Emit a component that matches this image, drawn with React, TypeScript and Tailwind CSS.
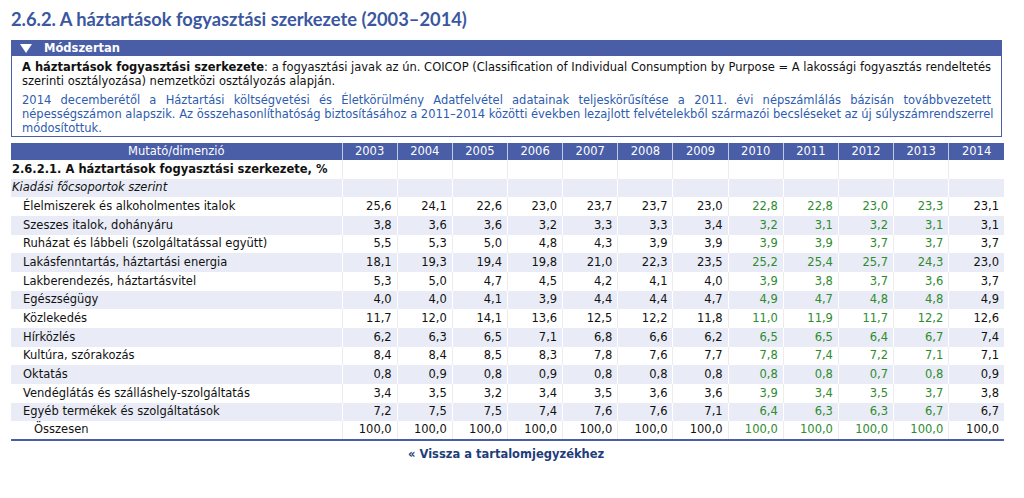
import React from "react"

const years = ["2003", "2004", "2005", "2006", "2007", "2008", "2009", "2010", "2011", "2012", "2013", "2014"]

// green = 2010–2013 columns
const rows: { label: string; values: string[]; total?: boolean }[] = [
  { label: "Élelmiszerek és alkoholmentes italok", values: ["25,6", "24,1", "22,6", "23,0", "23,7", "23,7", "23,0", "22,8", "22,8", "23,0", "23,3", "23,1"] },
  { label: "Szeszes italok, dohányáru", values: ["3,8", "3,6", "3,6", "3,2", "3,3", "3,3", "3,4", "3,2", "3,1", "3,2", "3,1", "3,1"] },
  { label: "Ruházat és lábbeli (szolgáltatással együtt)", values: ["5,5", "5,3", "5,0", "4,8", "4,3", "3,9", "3,9", "3,9", "3,9", "3,7", "3,7", "3,7"] },
  { label: "Lakásfenntartás, háztartási energia", values: ["18,1", "19,3", "19,4", "19,8", "21,0", "22,3", "23,5", "25,2", "25,4", "25,7", "24,3", "23,0"] },
  { label: "Lakberendezés, háztartásvitel", values: ["5,3", "5,0", "4,7", "4,5", "4,2", "4,1", "4,0", "3,9", "3,8", "3,7", "3,6", "3,7"] },
  { label: "Egészségügy", values: ["4,0", "4,0", "4,1", "3,9", "4,4", "4,4", "4,7", "4,9", "4,7", "4,8", "4,8", "4,9"] },
  { label: "Közlekedés", values: ["11,7", "12,0", "14,1", "13,6", "12,5", "12,2", "11,8", "11,0", "11,9", "11,7", "12,2", "12,6"] },
  { label: "Hírközlés", values: ["6,2", "6,3", "6,5", "7,1", "6,8", "6,6", "6,2", "6,5", "6,5", "6,4", "6,7", "7,4"] },
  { label: "Kultúra, szórakozás", values: ["8,4", "8,4", "8,5", "8,3", "7,8", "7,6", "7,7", "7,8", "7,4", "7,2", "7,1", "7,1"] },
  { label: "Oktatás", values: ["0,8", "0,9", "0,8", "0,9", "0,8", "0,8", "0,8", "0,8", "0,8", "0,7", "0,8", "0,9"] },
  { label: "Vendéglátás és szálláshely-szolgáltatás", values: ["3,4", "3,5", "3,2", "3,4", "3,5", "3,6", "3,6", "3,9", "3,4", "3,5", "3,7", "3,8"] },
  { label: "Egyéb termékek és szolgáltatások", values: ["7,2", "7,5", "7,5", "7,4", "7,6", "7,6", "7,1", "6,4", "6,3", "6,3", "6,7", "6,7"] },
  { label: "Összesen", values: Array(12).fill("100,0"), total: true },
]

const isGreen = (i: number) => i >= 7 && i <= 10

export default function App() {
  return (
    <div className="w-[1024px] h-[498px] bg-white pl-[11px] pt-[6px] font-['DejaVu_Sans',Verdana,sans-serif] text-[11.5px] text-[#111]">
      {/* Title */}
      <h1 className="font-['Lato',sans-serif] font-bold text-[18.3px] leading-[26px] text-[#3b57a0]">
        2.6.2. A háztartások fogyasztási szerkezete (2003–2014)
      </h1>

      {/* Methodology box */}
      <div className="mt-[8px] w-[991px] border border-[#4a5ea8]">
        <div className="flex items-center h-[15px] bg-[#4a5ea8] text-white font-bold leading-[15px]">
          <svg className="ml-[8px]" width="12" height="9" viewBox="0 0 12 9">
            <polygon points="0,0 12,0 6,9" fill="white" />
          </svg>
          <span className="ml-[12px]">Módszertan</span>
        </div>
        <div className="px-[10px] pt-[4px] pb-[1px] leading-[14px] text-justify">
          <p>
            <b>A háztartások fogyasztási szerkezete</b>: a fogyasztási javak az ún. COICOP (Classification of Individual Consumption by Purpose = A lakossági fogyasztás rendeltetés szerinti osztályozása) nemzetközi osztályozás alapján.
          </p>
          {/* lines split by hand so the wrap matches the original */}
          <p className="mt-[5px] text-[#2d5cb0]">
            <span className="block text-justify [text-align-last:justify]">
              2014 decemberétől a Háztartási költségvetési és Életkörülmény Adatfelvétel adatainak teljeskörűsítése a 2011. évi népszámlálás bázisán továbbvezetett
            </span>
            <span className="block whitespace-nowrap">
              népességszámon alapszik. Az összehasonlíthatóság biztosításához a 2011–2014 közötti években lezajlott felvételekből származói becsléseket az új súlyszámrendszerrel
            </span>
            <span className="block">módosítottuk.</span>
          </p>
        </div>
      </div>

      {/* Table */}
      <table className="mt-[6px] w-[993px] border-collapse table-fixed">
        <colgroup>
          <col className="w-[331px]" />
          {years.map((y) => (
            <col key={y} className="w-[55.17px]" />
          ))}
        </colgroup>
        <thead>
          <tr className="bg-[#4a5ea8] text-white h-[17px]">
            <th className="font-normal text-center leading-[17px] p-0">Mutató/dimenzió</th>
            {years.map((y) => (
              <th key={y} className="font-normal text-center leading-[17px] p-0 border-l border-[#c3cae6]">
                {y}
              </th>
            ))}
          </tr>
        </thead>
        <tbody>
          <tr className="h-[18.67px] bg-white">
            <td className="font-bold pl-[1px] p-0 whitespace-nowrap">2.6.2.1. A háztartások fogyasztási szerkezete, %</td>
            {years.map((y) => (
              <td key={y} className="p-0 border-l border-[#ececec]" />
            ))}
          </tr>
          <tr className="h-[18.67px] bg-[#e9ecf6]">
            <td className="italic pl-[1px] p-0">Kiadási főcsoportok szerint</td>
            {years.map((y) => (
              <td key={y} className="p-0 border-l border-white" />
            ))}
          </tr>
          {rows.map((r, ri) => {
            const shaded = ri % 2 === 1
            return (
              <tr
                key={r.label}
                className={
                  "h-[18.67px] " +
                  (shaded ? "bg-[#e9ecf6]" : "bg-white") +
                  (r.total ? " border-b-2 border-[#4a5ea8]" : "")
                }
              >
                <td className={r.total ? "p-0 pl-[23px] whitespace-nowrap" : "p-0 pl-[12px] whitespace-nowrap"}>{r.label}</td>
                {r.values.map((v, i) => (
                  <td
                    key={i}
                    className={
                      "p-0 pr-[5px] text-right border-l " +
                      (shaded ? "border-white " : "border-[#ececec] ") +
                      (isGreen(i) ? "text-[#2e8b2e]" : "")
                    }
                  >
                    {v}
                  </td>
                ))}
              </tr>
            )
          })}
        </tbody>
      </table>

      {/* Back link */}
      <div className="mt-[5px] pl-[397px]">
        <a className="font-bold text-[#1f3d7a]">« Vissza a tartalomjegyzékhez</a>
      </div>
    </div>
  )
}
